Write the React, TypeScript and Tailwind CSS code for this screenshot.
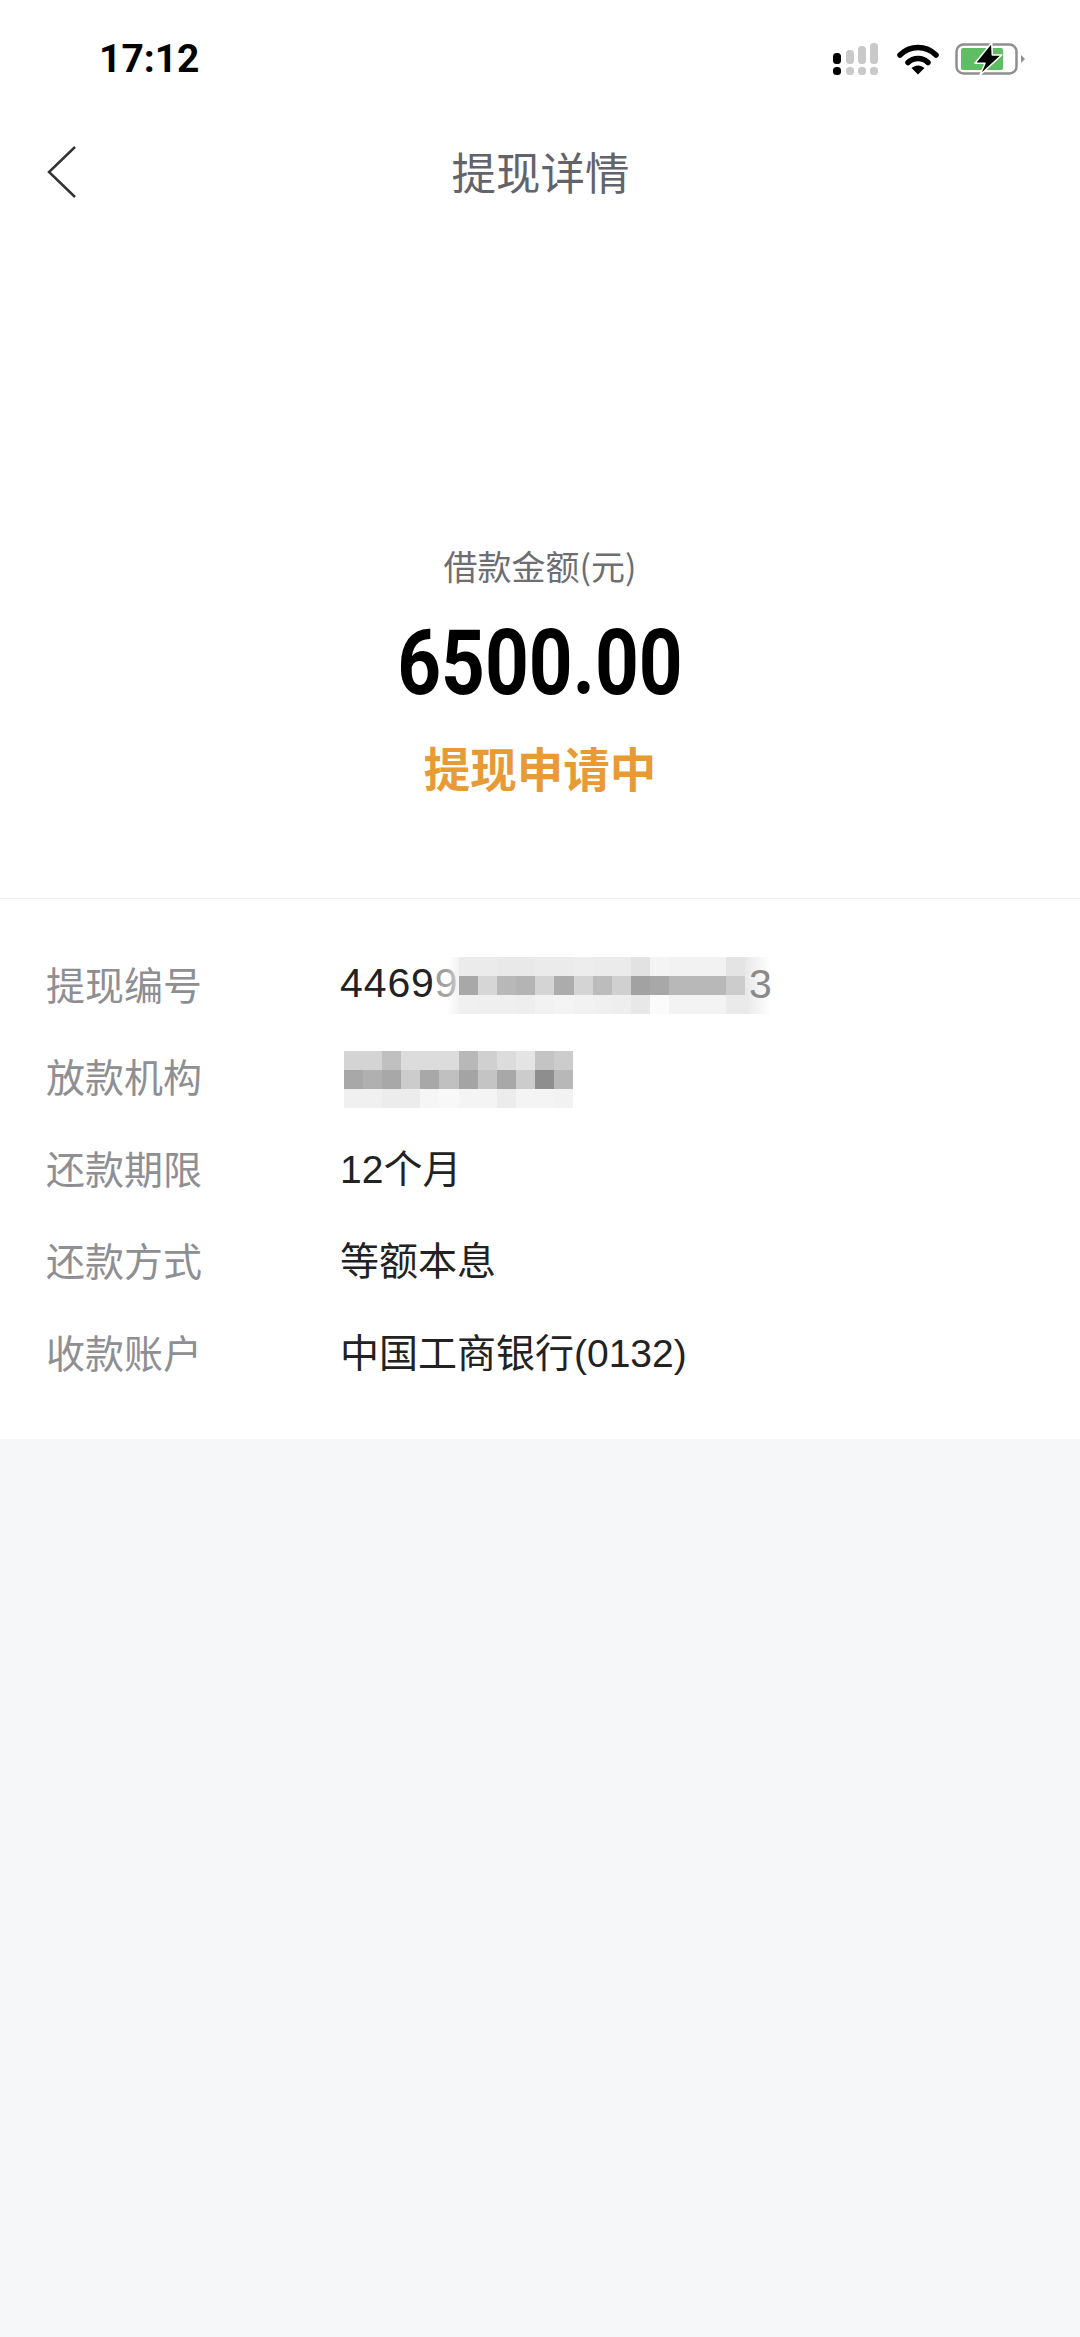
const numberMosaic = [
  ['#ebebeb', '#ebebeb', '#e9e9e9', '#e9e9e9', '#ebebeb', '#ebebeb', '#ededed', '#ebebeb', '#ebebeb', '#e2e2e2', '#f4f4f4', '#f2f2f2', '#f2f2f2', '#f2f2f2', '#e4e4e4'],
  ['#a8a8a8', '#d6d6d6', '#b8b8b8', '#b4b4b4', '#d4d4d4', '#acacac', '#d4d4d4', '#bcbcbc', '#d0d0d0', '#a2a2a2', '#a8a8a8', '#b8b8b8', '#b8b8b8', '#b8b8b8', '#cccccc'],
  ['#f0f0f0', '#efefef', '#efefef', '#eeeeee', '#f2f2f2', '#f4f4f4', '#f2f2f2', '#f0f0f0', '#eeeeee', '#e8e8e8', '#fbfbfb', '#f3f3f3', '#f3f3f3', '#f3f3f3', '#eaeaea'],
];

const lenderMosaic = [
  ['#d4d4d4', '#d4d4d4', '#c0c0c0', '#dcdcdc', '#dcdcdc', '#dcdcdc', '#b8b8b8', '#d0d0d0', '#dcdcdc', '#e4e4e4', '#c4c4c4', '#cccccc'],
  ['#a8a8a8', '#b0b0b0', '#a8a8a8', '#cccccc', '#a8a8a8', '#c0c0c0', '#a4a4a4', '#c4c4c4', '#a8a8a8', '#cccccc', '#8e8e8e', '#b8b8b8'],
  ['#f0f0f0', '#f0f0f0', '#ececec', '#ececec', '#f6f6f6', '#f8f8f8', '#f4f4f4', '#f4f4f4', '#ececec', '#f4f4f4', '#f4f4f4', '#f2f2f2'],
];

function Mosaic({ rows, className }: { rows: string[][]; className: string }) {
  return (
    <div className={`absolute flex flex-col ${className}`}>
      {rows.map((row, i) => (
        <div key={i} className="flex h-[19px]">
          {row.map((color, j) => (
            <div key={j} className="w-[19.1px]" style={{ backgroundColor: color }} />
          ))}
        </div>
      ))}
    </div>
  );
}

function SignalIcon() {
  return (
    <svg width="46" height="33" viewBox="0 0 46 33">
      <rect x="0" y="10" width="8" height="11" rx="3.5" fill="#000" />
      <rect x="0" y="24" width="8" height="8" rx="3.5" fill="#000" />
      <rect x="13" y="7" width="8" height="14" rx="3.5" fill="#c9c9c9" />
      <rect x="13" y="24" width="8" height="8" rx="3.5" fill="#c9c9c9" />
      <rect x="25" y="3" width="8" height="18" rx="3.5" fill="#c9c9c9" />
      <rect x="25" y="24" width="8" height="8" rx="3.5" fill="#c9c9c9" />
      <rect x="37" y="0" width="8" height="21" rx="3.5" fill="#c9c9c9" />
      <rect x="37" y="24" width="8" height="8" rx="3.5" fill="#c9c9c9" />
    </svg>
  );
}

function WifiIcon() {
  return (
    <svg width="42" height="32" viewBox="0 0 42 32" fill="none">
      <path d="M3 12C13 2 29 2 39 12" stroke="#000" strokeWidth="5.5" strokeLinecap="round" />
      <path d="M11 19.5C16.5 14 25.5 14 31 19.5" stroke="#000" strokeWidth="5.5" strokeLinecap="round" />
      <path d="M14.5 25L21 31.5L27.5 25C23.5 21.5 18.5 21.5 14.5 25Z" fill="#000" />
    </svg>
  );
}

function BatteryIcon() {
  return (
    <svg width="70" height="34" viewBox="0 0 70 34" fill="none">
      <rect x="1.5" y="2.5" width="60" height="29" rx="7" stroke="#8f8f8f" strokeWidth="2.5" />
      <rect x="6" y="6" width="42" height="22" rx="2" fill="#5fbd64" />
      <path d="M66 13L70 17L66 21Z" fill="#8f8f8f" />
      <path d="M36.7 0.7L20 21.3H30L25 33L46.7 13H37.3L36.7 0.7Z" fill="#000" stroke="#fff" strokeWidth="1.5" strokeLinejoin="round" />
    </svg>
  );
}

function InfoRow({ label, children }: { label: string; children: React.ReactNode }) {
  return (
    <div className="relative flex h-[92px] items-center">
      <span className="w-[294px] pb-[3px] text-[39px] text-[#8e8e93]">{label}</span>
      <span className="pt-[2px] font-['Liberation_Sans','Noto_Sans_CJK_SC',sans-serif] text-[39px] text-[#222222]">{children}</span>
    </div>
  );
}

export default function App() {
  return (
    <div className="flex min-h-[2337px] flex-col bg-[#f6f7f9] font-['Noto_Sans_CJK_SC','Noto_Sans',sans-serif]">
      <div className="bg-white">
        <div className="flex h-[118px] items-center justify-between pl-[99px] pr-[55px]">
          <span className="font-['Roboto',sans-serif] text-[39px] font-bold text-black">17:12</span>
          <div className="flex items-center">
            <SignalIcon />
            <div className="ml-[18px]">
              <WifiIcon />
            </div>
            <div className="ml-[16px]">
              <BatteryIcon />
            </div>
          </div>
        </div>

        <div className="relative flex h-[108px] items-center justify-center">
          <svg className="absolute left-[46px] top-[27px]" width="32" height="54" viewBox="0 0 32 54" fill="none">
            <path d="M29 2L3 27L29 52" stroke="#333333" strokeWidth="2.5" />
          </svg>
          <h1 className="pb-[2px] pl-[1px] text-[44.5px] font-normal text-[#63636b]">提现详情</h1>
        </div>

        <div className="flex h-[673px] flex-col items-center border-b border-[#eeeeee] pt-[313px]">
          <div className="text-[34px] leading-[54px] text-[#6e6e72]">借款金额(元)</div>
          <div className="mt-[23px] scale-x-[0.85] font-['Roboto',sans-serif] text-[90px] font-bold leading-[96px] text-black">
            6500.00
          </div>
          <div className="mt-[23px] text-[46.5px] font-bold leading-[64px] text-[#e89b35]">提现申请中</div>
        </div>

        <div className="px-[46px] pb-[40px] pt-[40px]">
          <InfoRow label="提现编号">
            <span className="relative -top-[2px] text-[41px] tracking-[0.9px]">
              4469<span className="text-[#a0a0a0]">9</span>
              <span className="text-[#cccccc]">9</span>
            </span>
            <Mosaic rows={numberMosaic} className="left-[413px] top-[18px]" />
            <div className="absolute left-[401px] top-[18px] h-[57px] w-[12px] bg-gradient-to-r from-transparent to-[#eeeeee]/70" />
            <div className="absolute left-[699px] top-[18px] h-[57px] w-[26px] bg-gradient-to-r from-[#e8e8e8] to-transparent" />
            <span className="absolute inset-y-0 left-[703px] flex items-center text-[41px] text-[#8a8a8a]">3</span>
          </InfoRow>
          <InfoRow label="放款机构">
            <Mosaic rows={lenderMosaic} className="left-[298px] top-[20px]" />
          </InfoRow>
          <InfoRow label="还款期限">12个月</InfoRow>
          <InfoRow label="还款方式">等额本息</InfoRow>
          <InfoRow label="收款账户">中国工商银行(0132)</InfoRow>
        </div>
      </div>
    </div>
  );
}
